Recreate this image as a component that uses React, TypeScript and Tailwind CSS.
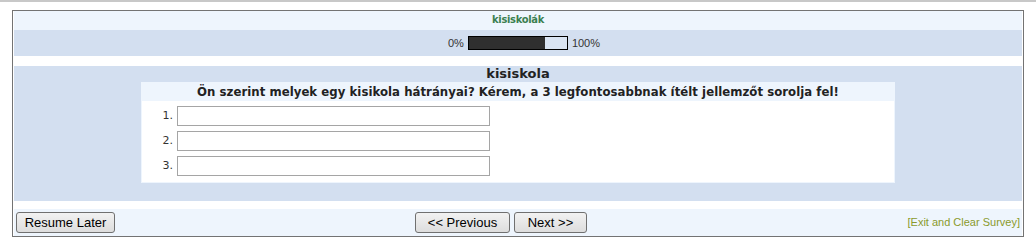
const Q = 'Ön szerint melyek egy kisikola hátrányai? Kérem, a 3 legfontosabbnak ítélt jellemzőt sorolja fel!';

function Btn({ label, w }: { label: string; w: string }) {
  return (
    <button
      className={`${w} h-[21px] rounded-[3px] border border-[#707070] bg-gradient-to-b from-[#f2f2f2] to-[#dddddd] text-[13px] text-black leading-none font-['Liberation_Sans',Arial,sans-serif]`}
    >
      {label}
    </button>
  );
}

export default function App() {
  return (
    <div className="w-[1036px] h-[246px] bg-white font-['Liberation_Sans',Arial,sans-serif]">
      <div className="h-[2px] bg-[#c8c8c8]" />
      <div className="pt-[8px] pl-[12px]">
        <div className="w-[1012px] border border-[#737373] px-px bg-white">
          {/* Survey title */}
          <div className="h-[19px] bg-[#eef5fd] flex items-center justify-center text-[11px] font-bold tracking-[-0.3px] text-[#3b8050] font-['DejaVu_Sans_Condensed','DejaVu_Sans',sans-serif]">
            kisiskolák
          </div>
          {/* Progress */}
          <div className="h-[26px] bg-[#d3dff0] flex items-center justify-center gap-[4px] pl-[12px] text-[11px] text-[#333]">
            <span>0%</span>
            <div className="w-[100px] h-[14px] border border-black bg-[#d9e4f3]">
              <div className="h-full w-[78%] bg-[#2f2f2f]" />
            </div>
            <span>100%</span>
          </div>
          <div className="h-[10px]" />
          {/* Question group */}
          <div className="h-[135px] bg-[#d3dff0] flex flex-col items-center">
            <div className="h-[16px] flex items-center text-[13px] font-bold text-[#222] font-['DejaVu_Sans',sans-serif]">
              kisiskola
            </div>
            <div className="w-[754px] border border-[#eef5fd] bg-white">
              <div className="h-[18px] bg-[#eef5fd] flex items-center justify-center text-[13px] font-bold tracking-[0.05px] text-[#222] font-['DejaVu_Sans_Condensed','DejaVu_Sans',sans-serif]">
                {Q}
              </div>
              <div className="flex flex-col gap-[5px] pt-[5px] pb-[6px]">
                {[1, 2, 3].map((n) => (
                  <div key={n} className="flex items-center gap-[4px]">
                    <span className="w-[31px] text-right text-[11px] text-[#333] font-['DejaVu_Sans',sans-serif]">{n}.</span>
                    <input className="w-[313px] h-[20px] border border-[#a5a5a5] bg-white outline-none" />
                  </div>
                ))}
              </div>
            </div>
          </div>
          <div className="h-[8px]" />
          {/* Navigation */}
          <div className="h-[27px] bg-[#eef5fd] flex items-center px-[2px]">
            <Btn label="Resume Later" w="w-[99px]" />
            <div className="ml-[300px] flex gap-[4px]">
              <Btn label="<< Previous" w="w-[95px]" />
              <Btn label="Next >>" w="w-[73px]" />
            </div>
            <span className="ml-auto text-[11px] text-[#8a9a2c]">[Exit and Clear Survey]</span>
          </div>
        </div>
      </div>
    </div>
  );
}
